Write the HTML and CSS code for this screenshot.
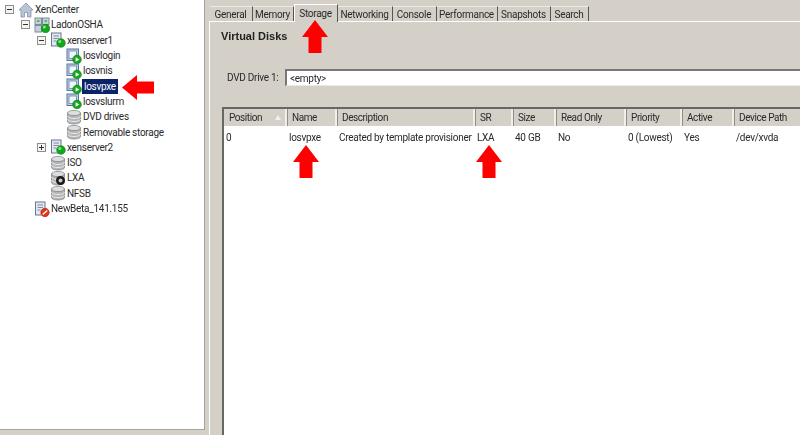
FILE: index.html
```html
<!DOCTYPE html>
<html lang="en">
<head>
<meta charset="utf-8">
<title>XenCenter</title>
<link rel="stylesheet" href="styles.css">
</head>
<body>
<svg class="defs" width="0" height="0" aria-hidden="true">
  <symbol id="ball" viewBox="0 0 10 10"><circle cx="5" cy="5" r="4.3" fill="#12a81c" stroke="#0b7a12" stroke-width=".6"/><circle cx="3.8" cy="3.6" r="1.5" fill="#7de884"/></symbol>
  <symbol id="i-home" viewBox="0 0 16 16"><path d="M8 1 15 8h-2v7H9.500v-4.500h-3V15H3V8H1z" fill="#b9c5d6" stroke="#8493aa" stroke-width=".8"/></symbol>
  <symbol id="i-pool" viewBox="0 0 16 16"><rect x="1" y="1" width="6.500" height="6.500" fill="#c7d0da" stroke="#7d8b9c"/><rect x="8.500" y="1" width="6.500" height="6.500" fill="#c7d0da" stroke="#7d8b9c"/><rect x="1" y="8.500" width="6.500" height="6.500" fill="#c7d0da" stroke="#7d8b9c"/><rect x="3" y="3" width="2.500" height="2" fill="#58b85e"/><rect x="10.500" y="3" width="2.500" height="2" fill="#58b85e"/><use href="#ball" x="6.500" y="6.500" width="10" height="10"/></symbol>
  <symbol id="i-server" viewBox="0 0 16 16"><rect x="1.500" y="1" width="9.500" height="13" fill="#e3e7ee" stroke="#69798f"/><path d="M3.500 4h5.500M3.500 6.500h5.500M3.500 9h3" stroke="#7f8da3"/><use href="#ball" x="6" y="6" width="10" height="10"/></symbol>
  <symbol id="i-down" viewBox="0 0 16 16"><rect x="1.500" y="1" width="9.500" height="13" fill="#e3e7ee" stroke="#69798f"/><path d="M3.500 4h5.500M3.500 6.500h5.500M3.500 9h3" stroke="#7f8da3"/><circle cx="11" cy="11.500" r="4.200" fill="#e2341d" stroke="#a8200e" stroke-width=".6"/><path d="M8.700 13.600 13.300 9.400" stroke="#fff" stroke-width="1.300"/></symbol>
  <symbol id="i-vm" viewBox="0 0 16 16"><rect x="1" y="1" width="11.500" height="11.500" fill="#bcd0e6" stroke="#59779c"/><rect x="3" y="3" width="7.500" height="7.500" fill="#f2f6fb" stroke="#6b86a8" stroke-width=".8"/><circle cx="11" cy="11.500" r="4.400" fill="#12a81c" stroke="#0b7a12" stroke-width=".5"/><path d="M9.600 9.200 13.400 11.500 9.600 13.800z" fill="#fff"/></symbol>
  <symbol id="i-disk" viewBox="0 0 16 16"><path d="M1.500 4v8.500C1.500 14 4.500 15 8 15s6.500-1 6.500-2.500V4z" fill="#b4b6b8" stroke="#7c7e80" stroke-width=".7"/><ellipse cx="8" cy="4" rx="6.500" ry="2.600" fill="#dcdedf" stroke="#7c7e80" stroke-width=".7"/><path d="M1.500 7c0 1.500 3 2.500 6.500 2.500S14.500 8.500 14.500 7M1.500 10c0 1.500 3 2.500 6.500 2.500s6.500-1 6.500-2.500" fill="none" stroke="#eceded"/></symbol>
  <symbol id="i-disk-def" viewBox="0 0 16 16"><use href="#i-disk" width="16" height="16"/><circle cx="10.500" cy="10.500" r="4.500" fill="#1a1a1a"/><circle cx="10.500" cy="10.500" r="2" fill="#c9c9c9"/></symbol>
</svg>

<div class="app">
  <aside class="side">
    <ul class="tree">
      <li class="row d0"><span class="exp minus"></span><svg class="ico"><use href="#i-home"/></svg><span class="lbl">XenCenter</span></li>
      <li class="row d1"><span class="exp minus"></span><svg class="ico"><use href="#i-pool"/></svg><span class="lbl">LadonOSHA</span></li>
      <li class="row d2"><span class="exp minus"></span><svg class="ico"><use href="#i-server"/></svg><span class="lbl">xenserver1</span></li>
      <li class="row d3"><span class="exp none"></span><svg class="ico"><use href="#i-vm"/></svg><span class="lbl">losvlogin</span></li>
      <li class="row d3"><span class="exp none"></span><svg class="ico"><use href="#i-vm"/></svg><span class="lbl">losvnis</span></li>
      <li class="row d3"><span class="exp none"></span><svg class="ico"><use href="#i-vm"/></svg><span class="lbl sel">losvpxe</span></li>
      <li class="row d3"><span class="exp none"></span><svg class="ico"><use href="#i-vm"/></svg><span class="lbl">losvslurm</span></li>
      <li class="row d3"><span class="exp none"></span><svg class="ico"><use href="#i-disk"/></svg><span class="lbl">DVD drives</span></li>
      <li class="row d3"><span class="exp none"></span><svg class="ico"><use href="#i-disk"/></svg><span class="lbl">Removable storage</span></li>
      <li class="row d2"><span class="exp plus"></span><svg class="ico"><use href="#i-server"/></svg><span class="lbl">xenserver2</span></li>
      <li class="row d2"><span class="exp none"></span><svg class="ico"><use href="#i-disk"/></svg><span class="lbl">ISO</span></li>
      <li class="row d2"><span class="exp none"></span><svg class="ico"><use href="#i-disk-def"/></svg><span class="lbl">LXA</span></li>
      <li class="row d2"><span class="exp none"></span><svg class="ico"><use href="#i-disk"/></svg><span class="lbl">NFSB</span></li>
      <li class="row d1"><span class="exp none"></span><svg class="ico"><use href="#i-down"/></svg><span class="lbl">NewBeta_141.155</span></li>
    </ul>
  </aside>

  <main class="main">
    <nav class="tabs">
      <a class="tab">General</a>
      <a class="tab">Memory</a>
      <a class="tab active">Storage</a>
      <a class="tab">Networking</a>
      <a class="tab">Console</a>
      <a class="tab">Performance</a>
      <a class="tab">Snapshots</a>
      <a class="tab">Search</a>
    </nav>
    <section class="panel">
      <h1 class="title">Virtual Disks</h1>
      <div class="dvd">
        <span class="dvd-label">DVD Drive 1:</span>
        <div class="dvd-box">&lt;empty&gt;</div>
      </div>
      <div class="list">
        <div class="grid head">
          <div class="th sorted">Position</div>
          <div class="th">Name</div>
          <div class="th">Description</div>
          <div class="th">SR</div>
          <div class="th">Size</div>
          <div class="th">Read Only</div>
          <div class="th">Priority</div>
          <div class="th">Active</div>
          <div class="th">Device Path</div>
        </div>
        <div class="grid body">
          <div class="td">0</div>
          <div class="td">losvpxe</div>
          <div class="td">Created by template provisioner</div>
          <div class="td">LXA</div>
          <div class="td">40 GB</div>
          <div class="td">No</div>
          <div class="td">0 (Lowest)</div>
          <div class="td">Yes</div>
          <div class="td">/dev/xvda</div>
        </div>
      </div>
    </section>
  </main>
</div>

<svg class="arrow a-left" viewBox="0 0 32 25"><polygon points="0,12.500 15,0 15,6.500 32,6.500 32,18.500 15,18.500 15,25"/></svg>
<svg class="arrow a-up a-tab" viewBox="0 0 26 33"><polygon points="13,0 26,17 19.500,17 19.500,33 6.500,33 6.500,17 0,17"/></svg>
<svg class="arrow a-up a-name" viewBox="0 0 26 33"><polygon points="13,0 26,17 19.500,17 19.500,33 6.500,33 6.500,17 0,17"/></svg>
<svg class="arrow a-up a-sr" viewBox="0 0 26 33"><polygon points="13,0 26,17 19.500,17 19.500,33 6.500,33 6.500,17 0,17"/></svg>
</body>
</html>
```

FILE: styles.css
```css
* { box-sizing: border-box; }
html, body { margin: 0; height: 100%; overflow: hidden; }
body {
  background: #d4d0c8;
  color: #2a2a2a;
  font: 10px/13px Roboto, "Liberation Sans", Arial, sans-serif;
  letter-spacing: -.28px;
  position: relative;
}
.defs { position: absolute; }

.app { display: flex; height: 435px; filter: blur(.3px); }

/* Tree */
.side {
  flex: 0 0 205px;
  height: 430px;
  background: #fff;
  border-right: 1px solid #a5a29c;
  border-bottom: 1px solid #a5a29c;
}
.tree { list-style: none; margin: 0; padding: 2px 0 0; }
.row { display: flex; align-items: center; height: 15.300px; white-space: nowrap; }
.d0 { padding-left: 5px; }
.d1 { padding-left: 21px; }
.d2 { padding-left: 37px; }
.d3 { padding-left: 53px; }
.exp {
  flex: none;
  position: relative;
  width: 9px;
  height: 9px;
  margin-right: 4px;
}
.minus, .plus { border: 1px solid #8e8e8e; background: #f4f4f0; }
.minus::before, .plus::before {
  content: "";
  position: absolute;
  left: 1px; top: 3px;
  width: 5px; height: 1px;
  background: #333;
}
.plus::after {
  content: "";
  position: absolute;
  left: 3px; top: 1px;
  width: 1px; height: 5px;
  background: #333;
}
.ico { flex: none; width: 16px; height: 16px; margin: 0 1px 0 0; }
.lbl { padding: 0 2px 0 0; }
.sel { background: #0a246a; color: #fff; padding: 1px 2px; margin-left: -1px; }

/* Right side */
.main { flex: 1; min-width: 0; display: flex; flex-direction: column; padding-left: 4px; }
.tabs {
  display: grid;
  grid-template-columns: 43px 41px 44px 55px 44px 61px 53px 38px;
  justify-content: start;
  align-items: end;
  height: 21px;
  padding-left: 1px;
}
.tab {
  height: 15px;
  text-align: center;
  line-height: 16px;
  border-right: 1px solid #555;
  border-top: 1px solid #ecebe6;
  padding-right: 1px;
}
.tab.active {
  height: 18px;
  margin-bottom: -1px;
  line-height: 17px;
  background: #d4d0c8;
  border-top: 1px solid #fff;
  border-left: 1px solid #fff;
  position: relative;
}
.panel {
  flex: 1;
  min-height: 0;
  border-top: 1px solid #fff;
  border-left: 1px solid #fff;
  padding: 8px 0 0 11px;
  display: flex;
  flex-direction: column;
}
.title { margin: 0; font: 700 11px/13px "Liberation Sans", Arial, sans-serif; letter-spacing: 0; color: #222; }
.dvd { display: flex; align-items: stretch; height: 17px; margin: 26px 0 0 6px; }
.dvd-label { width: 58px; line-height: 18px; white-space: nowrap; }
.dvd-box {
  flex: 1;
  background: #fff;
  border-top: 2px solid #777;
  border-left: 2px solid #777;
  border-bottom: 1px solid #ece9e2;
  padding-left: 3px;
  line-height: 15px;
}
.list {
  flex: 1;
  min-height: 0;
  margin: 21px 0 0 1px;
  background: #fff;
  border-top: 2px solid #666;
  border-left: 2px solid #666;
}
.grid {
  display: grid;
  grid-template-columns: 64px 50px 138px 38px 43px 70px 56px 52px 65px;
}
.head { height: 17px; background: #d4d0c8; letter-spacing: -.42px; }
.th {
  position: relative;
  padding-left: 4px;
  line-height: 17px;
  border-right: 1px solid #8f8d88;
  box-shadow: inset -2px 0 0 #efeee9;
  white-space: nowrap;
}
.th:first-child { padding-left: 5px; }
.th:last-child { border-right: 0; box-shadow: none; }
.sorted::after {
  content: "";
  position: absolute;
  right: 6px; top: 6px;
  border: 3.500px solid transparent;
  border-top: 0;
  border-bottom: 5px solid #f1f0ec;
}
.body { padding-top: 5px; }
.td { padding-left: 1px; line-height: 13px; white-space: nowrap; }
.td:first-child { padding-left: 2px; }

/* Red annotation arrows drawn over the screenshot */
.arrow { position: absolute; fill: #fe0000; filter: blur(.3px); }
.a-left { left: 122px; top: 74.500px; width: 32px; height: 25px; }
.a-up { width: 26px; height: 33px; }
.a-tab { left: 301.500px; top: 20px; }
.a-name { left: 293px; top: 145px; }
.a-sr { left: 476px; top: 145px; }
```
